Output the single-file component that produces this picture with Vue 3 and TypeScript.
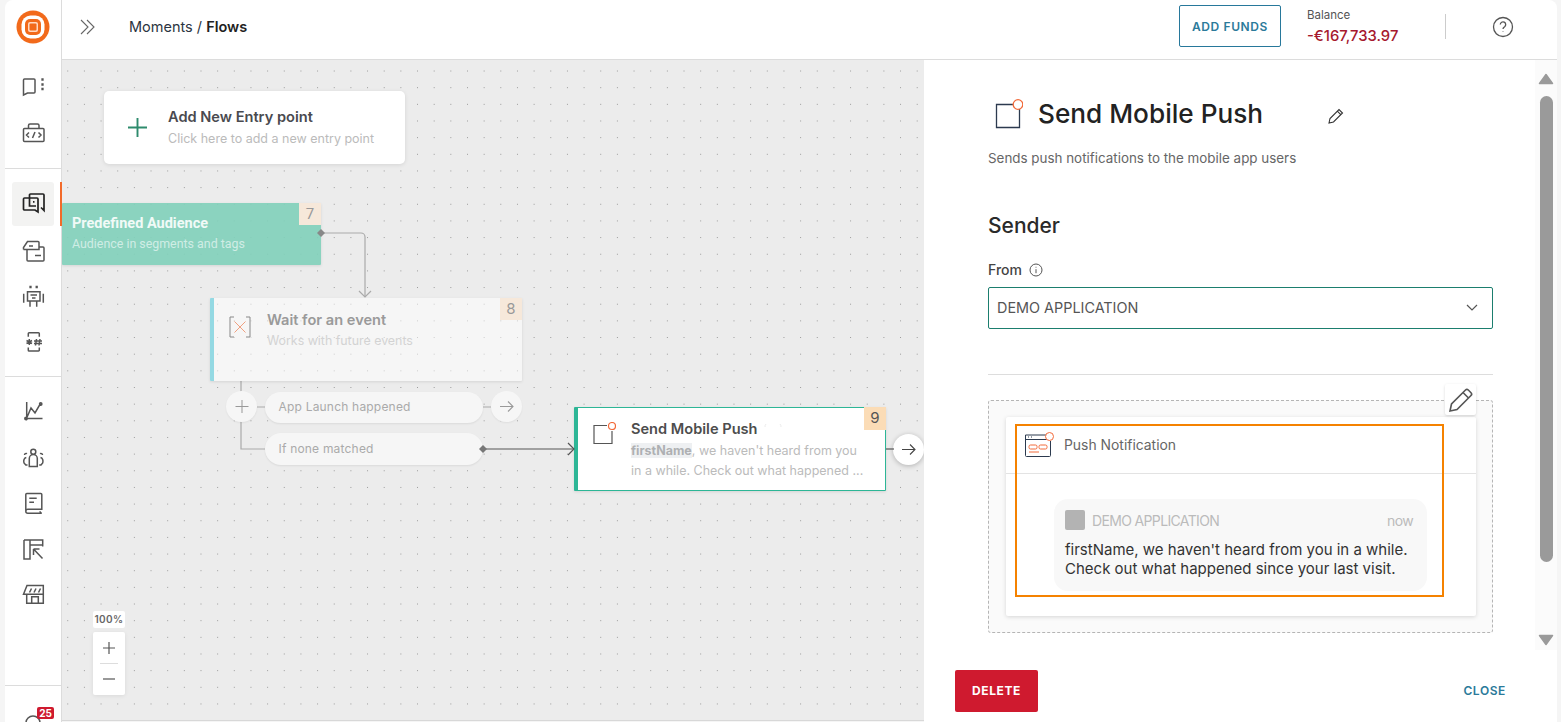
<script setup lang="ts">
interface NavIcon {
  d: string
}

const dot = (x: number, y: number) => `M${x - 0.4} ${y - 0.4}h0.8v0.8h-0.8z`

const topIcons: NavIcon[] = [
  { d: `M3.5 5h9.5a1 1 0 0 1 1 1v12a1 1 0 0 1-1 1H6.500L2.500 21V6a1 1 0 0 1 1-1z${dot(21.5, 5.5)}${dot(21.5, 10.5)}${dot(21.5, 15)}` },
  { d: 'M3.5 8.500h18.500a1 1 0 0 1 1 1v11a1 1 0 0 1-1 1H3.5a1 1 0 0 1-1-1v-11a1 1 0 0 1 1-1zM7.5 8.500V5.500a1.500 1.500 0 0 1 1.500-1.500h7.500a1.500 1.500 0 0 1 1.500 1.500v3M8 12.500l-2.500 2.500 2.500 2.500M17.500 12.500l2.500 2.500-2.500 2.500M14 12l-2.500 6' },
]
const flowIcons: NavIcon[] = [
  { d: 'M8.500 6V3a1 1 0 0 1 1-1H22a1 1 0 0 1 1 1v15.500l-3-3M3.500 6H16a1 1 0 0 1 1 1v13l-3-2H3.500a1 1 0 0 1-1-1V7a1 1 0 0 1 1-1zM8.500 6V14H15M12 9.800h1.500' },
  { d: 'M2.500 10.500V8.500L6.500 2.500H17a1 1 0 0 1 1 1V10.500H2.500M18 8h4a1 1 0 0 1 1 1V21a1 1 0 0 1-1 1H7a1 1 0 0 1-1-1V10.500M8 7h4M14 16.500h6' },
  { d: `M6.500 6.700H19v9.300H6.500zM9.500 10h6.500M11 13h3.500M9 16v5.700M15.700 16v5.700M2.700 8.700v9M22.300 8.700v9${dot(9.5, 2)}${dot(15.7, 2)}` },
  { d: 'M7.300 5.700V2.500a.8.8 0 0 1 .8-.8h9.400a.8.8 0 0 1 .8.8v3.200M7.300 16.500V19.200a.8.8 0 0 0 .8.8h9.400a.8.8 0 0 0 .8-.8v-2.700M8.300 8v6M5.500 9.500l5.500 3M11 9.500l-5.500 3M15.500 8l-1 6.500M19 8l-1 6.500M13 10h8M13 12.500h8' },
]
const reportIcons: NavIcon[] = [
  { d: 'M5.700 3v16.500M4 19.500h17.500M5.700 19L10 9l4 5 5.500-9.500M3.800 19.500a1.200 1.200 0 1 0 2.400 0 1.200 1.200 0 0 0-2.400 0zM18.500 5a1.200 1.200 0 1 0 2.400 0 1.200 1.200 0 0 0-2.400 0z' },
  { d: 'M9.800 6.700a2.500 2.500 0 1 0 5 0 2.500 2.500 0 0 0-5 0zM8.300 21.500V13.500a4 4 0 0 1 8 0v8zM3.500 10a1.700 1.700 0 0 1 2.500-1.400M5.300 12.500C3 13 2.300 15.500 3 18l1.800 2H6.500M21.500 10a1.700 1.700 0 0 0-2.500-1.400M19.500 12.500c2.200.5 2.900 3 2.200 5.500l-1.700 2h-1.800' },
  { d: 'M4.800 19.500V3.500a1 1 0 0 1 1-1h14a1 1 0 0 1 1 1v14.700H6.800a2 2 0 0 0 0 4h14M20.800 22.200a2 2 0 0 1-1.800-2M8.300 7.300h7.400M8.300 11.300h4.700' },
  { d: 'M3 3h18.700v6.500M3 3v19h6V3M9 8h12.700M12.500 12v6M12.500 12h6M12.500 12l9 9.500' },
  { d: 'M2.500 11.300L6 2.500h16.300v8.800zM5.700 11.300v9h16.600v-9M10.700 20.300v-6.600h6.600v6.600M8.500 9.500l2-4M13 9.500l2-4M17.500 9.500l2-4' },
]
</script>

<template>
  <div class="app">
    <aside class="sidebar">
      <div class="nav-group nav-group--logo">
        <svg class="logo" viewBox="0 0 34 34" aria-label="Logo">
          <circle cx="17" cy="17" r="16.500" fill="#f26a1b" />
          <rect x="5.500" y="5.500" width="23" height="23" rx="9" fill="#fff" />
          <rect x="9" y="9" width="16" height="16" rx="5" fill="#f26a1b" />
          <rect x="12" y="12" width="10" height="10" rx="2" fill="#ffd9c2" />
          <rect x="13.500" y="13.500" width="7" height="7" rx="1" fill="#f26a1b" />
        </svg>
        <button v-for="icon in topIcons" :key="icon.d" class="nav-item">
          <svg viewBox="0 0 24 24" class="nav-icon"><path :d="icon.d" /></svg>
        </button>
      </div>
      <div class="nav-group nav-group--flows">
        <button
          v-for="(icon, i) in flowIcons"
          :key="icon.d"
          :class="['nav-item', { 'nav-item--active': i === 0 }]"
        >
          <svg viewBox="0 0 24 24" class="nav-icon"><path :d="icon.d" /></svg>
        </button>
      </div>
      <div class="nav-group nav-group--reports">
        <button v-for="icon in reportIcons" :key="icon.d" class="nav-item">
          <svg viewBox="0 0 24 24" class="nav-icon"><path :d="icon.d" /></svg>
        </button>
      </div>
      <div class="nav-foot">
        <svg viewBox="0 0 24 24" class="nav-icon foot-icon"><circle cx="12" cy="11" r="7" /></svg>
        <span class="foot-badge">25</span>
      </div>
    </aside>

    <div class="main">
      <header class="topbar">
        <svg class="expand" viewBox="0 0 18 18">
          <path d="M2 2l7 7-7 7M8 2l7 7-7 7" />
        </svg>
        <div class="crumbs">Moments / <strong>Flows</strong></div>
        <button class="add-funds">ADD FUNDS</button>
        <div class="balance">
          <span class="balance__label">Balance</span>
          <span class="balance__value">-€167,733.97</span>
        </div>
        <span class="topbar__divider"></span>
        <svg class="help" viewBox="0 0 22 22">
          <circle cx="11" cy="11" r="9.500" />
          <path d="M8.300 8.500a2.700 2.700 0 1 1 4.300 2.200c-1 .7-1.600 1.200-1.600 2.300M11 15.400v.6" />
        </svg>
      </header>

      <div class="workspace">
        <section class="canvas">
          <svg class="wires" width="862" height="662">
            <g fill="none" stroke="#aaa" stroke-width="1.200">
              <path d="M179 321v68h24" />
              <path d="M195 347h8M421 347h8" />
            </g>
          </svg>

          <div class="entry">
            <svg class="entry__plus" viewBox="0 0 20 20"><path d="M10 0v20M0 10h20" /></svg>
            <div>
              <div class="entry__title">Add New Entry point</div>
              <div class="entry__sub">Click here to add a new entry point</div>
            </div>
          </div>

          <div class="node node--audience">
            <span class="badge">7</span>
            <div class="node__title">Predefined Audience</div>
            <div class="node__sub">Audience in segments and tags</div>
          </div>

          <div class="node node--wait">
            <span class="badge">8</span>
            <svg class="wait-icon" viewBox="0 0 24 24">
              <path d="M6 2H2v20h4M18 2h4v20h-4" fill="none" stroke="#888" stroke-width="1" />
              <path d="M6.500 6.500l11 11M17.500 6.500l-11 11" fill="none" stroke="#f0a080" stroke-width="1" />
            </svg>
            <div class="wait-title">Wait for an event</div>
            <div class="wait-sub">Works with future events</div>
          </div>

          <span class="round round--plus">
            <svg viewBox="0 0 14 14"><path d="M7 0v14M0 7h14" /></svg>
          </span>
          <div class="pill pill--one">App Launch happened</div>
          <span class="round round--arrow">
            <svg viewBox="0 0 14 12"><path d="M0 6h13M8 1l5 5-5 5" /></svg>
          </span>
          <div class="pill pill--two">If none matched</div>

          <div class="node node--push">
            <span class="badge badge--strong">9</span>
            <svg class="push-icon" viewBox="0 0 24 24">
              <path d="M15 3.500H2v18h18V9" fill="none" stroke="#555" stroke-width="1.200" />
              <circle cx="20" cy="4" r="3.500" fill="#fff" stroke="#f26a3a" stroke-width="1.200" />
            </svg>
            <div class="push-title">
              Send Mobile Push
              <svg class="push-marks" viewBox="0 0 20 12"><path d="M3 1a4 4 0 0 0-1 3M17 1a4 4 0 0 1 1 3" /></svg>
            </div>
            <div class="push-text">
              <span class="token">firstName</span>, we haven't heard from you<br />in a while. Check out what happened ...
            </div>
          </div>
          <span class="round round--next">
            <svg viewBox="0 0 14 12"><path d="M0 6h13M8 1l5 5-5 5" /></svg>
          </span>

          <svg class="wires" width="862" height="662">
            <g fill="none" stroke="#aaa" stroke-width="1.200">
              <path d="M259 173h40a4 4 0 0 1 4 4v60" />
              <path d="M297 231l6 6 6-6" />
            </g>
            <g fill="none" stroke="#555" stroke-width="1.200">
              <path d="M421 389h90" />
              <path d="M506 383l6 6-6 6" />
              <path d="M824 389h8" />
            </g>
            <path d="M255 173l4-4 4 4-4 4z" fill="#888" />
            <path d="M417 389l4-4 4 4-4 4z" fill="#777" />
          </svg>

          <div class="zoom">
            <div class="zoom__level">100%</div>
            <div class="zoom__ctrl">
              <svg viewBox="0 0 14 14"><path d="M7 1v12M1 7h12" /></svg>
              <span class="zoom__rule"></span>
              <svg viewBox="0 0 14 14"><path d="M1 7h12" /></svg>
            </div>
          </div>
        </section>

        <aside class="panel">
          <div class="panel__body">
            <div class="panel__content">
              <div class="panel__head">
                <svg class="head-icon" viewBox="0 0 28 30">
                  <path d="M20 5.500H1.500v23h23V10" fill="none" stroke="#2c3a4f" stroke-width="1.300" />
                  <circle cx="23" cy="5.500" r="4.800" fill="#fff" stroke="#f26a3a" stroke-width="1.300" />
                </svg>
                <h1>Send Mobile Push</h1>
                <svg class="head-edit" viewBox="0 0 16 16">
                  <path d="M1 15l1-4.500L11 1.500 14.500 5 5.500 14zM9.300 3.200l3.500 3.500" />
                </svg>
              </div>
              <p class="panel__desc">Sends push notifications to the mobile app users</p>

              <h2>Sender</h2>
              <div class="from">
                From
                <svg viewBox="0 0 14 14"><circle cx="7" cy="7" r="6" /><path d="M7 6.200v4M7 3.800v.8" /></svg>
              </div>
              <div class="select">
                <span>DEMO APPLICATION</span>
                <svg viewBox="0 0 12 7"><path d="M1 1l5 5 5-5" /></svg>
              </div>

              <hr />

              <div class="preview">
                <button class="preview__edit">
                  <svg viewBox="0 0 26 26"><path d="M2 24l1.500-7L17.500 3a2 2 0 0 1 2.800 0l2.700 2.700a2 2 0 0 1 0 2.800L9 22.500zM15 5.500l5.500 5.500" /></svg>
                </button>
                <div class="card">
                  <div class="card__head">
                    <svg class="card__icon" viewBox="0 0 30 25">
                      <path d="M23 3H1.500v20.500a1 1 0 0 0 1 1h23a1 1 0 0 0 1-1V9M1.500 7.500h22" fill="none" stroke="#2c3a4f" stroke-width="1" />
                      <path d="M4 5h1M7 5h1" stroke="#2c3a4f" stroke-width="1" />
                      <rect x="5" y="13" width="8" height="4" rx="1.500" fill="none" stroke="#f26a3a" stroke-width="1" />
                      <rect x="15" y="13" width="8" height="4" rx="1.500" fill="none" stroke="#f26a3a" stroke-width="1" />
                      <path d="M5 20h10" stroke="#f26a3a" stroke-width="1" />
                      <circle cx="25.500" cy="4.500" r="4" fill="#fff" stroke="#f26a3a" stroke-width="1" />
                    </svg>
                    <span>Push Notification</span>
                  </div>
                  <div class="bubble">
                    <div class="bubble__head">
                      <span class="bubble__app"></span>
                      <span class="bubble__name">DEMO APPLICATION</span>
                      <span class="bubble__time">now</span>
                    </div>
                    <div class="bubble__text">firstName, we haven't heard from you in a while.<br />Check out what happened since your last visit.</div>
                  </div>
                  <div class="highlight"></div>
                </div>
              </div>
            </div>
            <div class="scrollbar">
              <svg viewBox="0 0 16 12"><path d="M8 1.500l6.500 9h-13z" /></svg>
              <span class="scrollbar__thumb"></span>
              <svg viewBox="0 0 16 12"><path d="M1.500 1.500h13L8 10.500z" /></svg>
            </div>
          </div>
          <footer class="panel__foot">
            <button class="delete">DELETE</button>
            <button class="close">CLOSE</button>
          </footer>
        </aside>
      </div>
    </div>
  </div>
</template>

<style>
html,
body {
  margin: 0;
  background: #f5f5f5;
}
</style>

<style scoped>
.app {
  display: flex;
  height: 722px;
  width: 1561px;
  box-sizing: border-box;
  padding: 0 4px 0 5px;
  overflow: hidden;
  font-family: Inter, 'Noto Sans', sans-serif;
  color: #333;
}

button {
  font-family: inherit;
  border: 0;
  background: none;
  padding: 0;
}

.sidebar {
  width: 57px;
  flex-shrink: 0;
  display: flex;
  flex-direction: column;
  background: #fff;
  border-right: 1px solid #dcdcdc;
  box-sizing: border-box;
  border-top-left-radius: 8px;
}

.nav-group {
  display: flex;
  flex-direction: column;
  align-items: center;
  border-bottom: 1px solid #dcdcdc;
  box-sizing: border-box;
}

.nav-group--logo {
  height: 169px;
  padding-top: 10px;
}

.nav-group--flows {
  height: 208px;
  padding-top: 13px;
}

.nav-group--reports {
  height: 309px;
  padding-top: 11px;
}

.logo {
  width: 34px;
  height: 34px;
  margin-bottom: 19px;
}

.nav-item {
  width: 42px;
  height: 46px;
  display: flex;
  align-items: center;
  justify-content: center;
  position: relative;
  flex-shrink: 0;
}

.nav-item--active {
  height: 44px;
  margin-bottom: 2px;
  background: #f3f3f2;
  border-radius: 3px;
}

.nav-item--active::after {
  content: '';
  position: absolute;
  left: 48px;
  top: 0;
  width: 2px;
  height: 44px;
  background: #f26a2a;
}

.nav-icon {
  width: 24px;
  height: 24px;
  fill: none;
  stroke: #555;
  stroke-width: 1.5;
}

.nav-item--active .nav-icon {
  stroke: #222;
  stroke-width: 1.7;
}

.nav-foot {
  position: relative;
  flex: 1;
}

.foot-icon {
  position: absolute;
  left: 16px;
  top: 26px;
}

.foot-badge {
  position: absolute;
  left: 32px;
  top: 21px;
  width: 17px;
  height: 12px;
  background: #cf1a2f;
  color: #fff;
  font-size: 10px;
  font-weight: 700;
  line-height: 12px;
  text-align: center;
  border-radius: 2px;
}

.main {
  flex: 1;
  min-width: 0;
  display: flex;
  flex-direction: column;
}

.topbar {
  height: 60px;
  flex-shrink: 0;
  box-sizing: border-box;
  display: flex;
  align-items: center;
  background: #fff;
  border-bottom: 1px solid #dcdcdc;
  border-top-right-radius: 8px;
  padding: 0 43px 0 17px;
}

.expand {
  width: 18px;
  height: 18px;
  fill: none;
  stroke: #666;
  stroke-width: 1.1;
  margin-right: 32px;
  margin-top: -6px;
  flex-shrink: 0;
}

.crumbs {
  font-size: 14.5px;
  color: #2b3441;
  flex: 1;
  margin-top: -7px;
}

.crumbs strong {
  font-weight: 600;
  color: #222;
}

.add-funds {
  width: 102px;
  height: 42px;
  border: 1px solid #27789b;
  border-radius: 2px;
  color: #2b7a9a;
  font-size: 12px;
  font-weight: 600;
  letter-spacing: 0.6px;
  margin-top: -7px;
}

.balance {
  display: flex;
  flex-direction: column;
  margin-left: 26px;
  width: 138px;
  margin-top: -5px;
}

.balance__label {
  font-size: 11.5px;
  line-height: 15px;
  color: #555;
}

.balance__value {
  font-size: 14.8px;
  font-weight: 500;
  line-height: 20px;
  margin-top: 3px;
  color: #a6192e;
}

.topbar__divider {
  width: 1px;
  height: 25px;
  background: #ccc;
  margin-top: -6px;
}

.help {
  width: 22px;
  height: 22px;
  margin-left: 46px;
  margin-top: -6px;
  fill: none;
  stroke: #555;
  stroke-width: 1.3;
}

.workspace {
  flex: 1;
  min-height: 0;
  display: flex;
}

.canvas {
  flex: 1;
  min-width: 0;
  position: relative;
  overflow: hidden;
  background-color: #ececec;
  background-image: radial-gradient(circle, #999 0.55px, transparent 0.9px);
  background-size: 16.667px 16.667px;
  background-position: -2.6px 2.7px;
  border-bottom: 1px solid #d8d8d8;
  margin-bottom: 1px;
}

.wires {
  position: absolute;
  left: 0;
  top: 0;
  pointer-events: none;
}

.entry {
  position: absolute;
  left: 42px;
  top: 31px;
  width: 301px;
  height: 73px;
  box-sizing: border-box;
  background: #fff;
  border-radius: 5px;
  box-shadow: 0 1px 4px rgba(0, 0, 0, 0.1);
  display: flex;
  align-items: center;
  padding-left: 24px;
}

.entry__plus {
  width: 19px;
  height: 19px;
  fill: none;
  stroke: #2e8b6d;
  stroke-width: 2;
  margin-right: 21px;
  flex-shrink: 0;
}

.entry__title {
  font-size: 14.6px;
  font-weight: 600;
  color: #4a4a4f;
  line-height: 18px;
}

.entry__sub {
  font-size: 12.5px;
  color: #bbb;
  line-height: 16px;
  margin-top: 5px;
}

.node {
  position: absolute;
  box-sizing: border-box;
  box-shadow: 0 1px 3px rgba(0, 0, 0, 0.1);
  border-radius: 1px;
}

.badge {
  position: absolute;
  right: 0;
  top: 0;
  width: 22px;
  height: 22px;
  background: #f6e8da;
  color: #999;
  font-size: 15px;
  line-height: 22px;
  text-align: center;
}

.badge--strong {
  right: -1px;
  top: -1px;
  background: #fbdcb6;
  color: #555;
  height: 23px;
}

.node--audience {
  left: 0;
  top: 143px;
  width: 259px;
  height: 62px;
  background: rgba(130, 208, 187, 0.92);
  padding: 13px 0 0 10px;
  font-family: Roboto, sans-serif;
}

.node__title {
  font-size: 14.5px;
  font-weight: 700;
  color: #f1faf7;
  line-height: 16px;
}

.node__sub {
  font-size: 12.4px;
  color: rgba(255, 255, 255, 0.6);
  line-height: 16px;
  margin-top: 4px;
}

.node--wait {
  left: 148px;
  top: 238px;
  width: 312px;
  height: 83px;
  background: rgba(255, 255, 255, 0.5);
  border-left: 4px solid #94d9e3;
  padding: 13px 0 0 53px;
}

.wait-icon {
  position: absolute;
  left: 14px;
  top: 17px;
  width: 24px;
  height: 24px;
}

.wait-title {
  font-size: 14.6px;
  font-weight: 600;
  color: #9a9a9a;
  line-height: 18px;
}

.wait-sub {
  font-size: 12.4px;
  color: #d3d3d3;
  line-height: 16px;
  margin-top: 4px;
}

.pill {
  position: absolute;
  left: 203px;
  width: 218px;
  height: 31px;
  box-sizing: border-box;
  background: #f6f6f6;
  border-radius: 16px;
  box-shadow: 0 1px 2px rgba(0, 0, 0, 0.08);
  color: #aaa;
  font-size: 12px;
  letter-spacing: 0.2px;
  line-height: 30px;
  padding-left: 13.5px;
}

.pill--one {
  top: 332px;
}

.pill--two {
  top: 373px;
  height: 32px;
  line-height: 32px;
}

.round {
  position: absolute;
  width: 31px;
  height: 31px;
  border-radius: 50%;
  background: #f6f6f6;
  display: flex;
  align-items: center;
  justify-content: center;
  box-shadow: 0 1px 2px rgba(0, 0, 0, 0.06);
}

.round svg {
  width: 14px;
  height: 13px;
  fill: none;
  stroke: #999;
  stroke-width: 1.1;
}

.round--plus {
  left: 164px;
  top: 331px;
}

.round--arrow {
  left: 429px;
  top: 331px;
}

.round--next {
  left: 831px;
  top: 374px;
  background: #fff;
  box-shadow: 0 1px 5px rgba(0, 0, 0, 0.25);
}

.round--next svg {
  stroke: #444;
}

.node--push {
  left: 512px;
  top: 347px;
  width: 312px;
  height: 84px;
  background: #fff;
  border: 1px solid #2db696;
  border-left-width: 4px;
  padding: 12px 0 0 53px;
}

.push-icon {
  position: absolute;
  left: 14px;
  top: 14px;
  width: 24px;
  height: 24px;
}

.push-title {
  display: flex;
  align-items: center;
  font-size: 14.6px;
  font-weight: 600;
  color: #4d4d4d;
  line-height: 18px;
}

.push-marks {
  width: 20px;
  height: 12px;
  margin-left: 5px;
  fill: none;
  stroke: #ececec;
  stroke-width: 1;
}

.push-text {
  font-size: 12.5px;
  color: #bbb;
  line-height: 20px;
  margin-top: 3px;
}

.token {
  background: #eef0f2;
  font-weight: 700;
  color: #aeb0b3;
}

.zoom {
  position: absolute;
  left: 31px;
  top: 551px;
  width: 32px;
}

.zoom__level {
  height: 17px;
  background: #fff;
  border-radius: 2px;
  color: #666;
  font-size: 10px;
  font-weight: 600;
  letter-spacing: 0.4px;
  line-height: 17px;
  text-align: center;
}

.zoom__ctrl {
  margin-top: 4px;
  height: 63px;
  background: #fff;
  border-radius: 2px;
  box-shadow: 0 1px 4px rgba(0, 0, 0, 0.08);
  display: flex;
  flex-direction: column;
  align-items: center;
  padding-top: 9px;
  box-sizing: border-box;
}

.zoom__ctrl svg {
  width: 14px;
  height: 14px;
  fill: none;
  stroke: #555;
  stroke-width: 1.2;
}

.zoom__rule {
  width: 18px;
  height: 1px;
  background: #ddd;
  margin: 8px 0;
}

.panel {
  width: 633px;
  flex-shrink: 0;
  background: #fff;
  display: flex;
  flex-direction: column;
  min-height: 0;
}

.panel__body {
  flex: 1;
  min-height: 0;
  display: flex;
}

.panel__content {
  flex: 1;
  min-width: 0;
  overflow: hidden;
  padding: 39px 42px 0 64px;
}

.panel__head {
  display: flex;
  align-items: center;
  height: 30px;
}

.head-icon {
  width: 28px;
  height: 30px;
  margin-left: 7px;
  margin-right: 15px;
  flex-shrink: 0;
}

h1 {
  margin: 0;
  width: 290px;
  font-size: 26.2px;
  font-weight: 500;
  color: #222;
  line-height: 34px;
}

.head-edit {
  width: 16px;
  height: 16px;
  fill: none;
  stroke: #333;
  stroke-width: 1.1;
  margin-top: 3px;
}

.panel__desc {
  margin: 19px 0 0;
  font-size: 13.4px;
  line-height: 20px;
  color: #666;
}

h2 {
  margin: 45px 0 0;
  font-size: 21px;
  font-weight: 500;
  line-height: 26px;
  color: #2a2a2a;
}

.from {
  display: flex;
  align-items: center;
  gap: 7px;
  margin-top: 22px;
  font-size: 14px;
  font-weight: 500;
  line-height: 18px;
  color: #444;
}

.from svg {
  width: 14px;
  height: 14px;
  fill: none;
  stroke: #555;
  stroke-width: 1;
}

.select {
  margin-top: 8px;
  height: 42px;
  box-sizing: border-box;
  border: 1px solid #1b7e6e;
  border-radius: 2px;
  display: flex;
  align-items: center;
  justify-content: space-between;
  padding: 0 14px 1px 8px;
  font-size: 14.4px;
  color: #555;
}

.select svg {
  width: 12px;
  height: 7px;
  fill: none;
  stroke: #555;
  stroke-width: 1.2;
}

hr {
  border: 0;
  border-top: 1px solid #ddd;
  margin: 45px 0 25px;
}

.preview {
  position: relative;
  height: 233px;
  box-sizing: border-box;
  border: 1px dashed #b5b5b5;
  border-radius: 3px;
  background: #fafafa;
  padding: 16px 16px 0 17px;
}

.preview__edit {
  position: absolute;
  right: 16px;
  top: -17px;
  width: 31px;
  height: 31px;
  background: #fff;
  border-radius: 2px;
  box-shadow: 0 1px 3px rgba(0, 0, 0, 0.15);
  display: flex;
  align-items: center;
  justify-content: center;
  z-index: 1;
}

.preview__edit svg {
  width: 26px;
  height: 26px;
  fill: none;
  stroke: #555;
  stroke-width: 1.6;
}

.card {
  position: relative;
  height: 199px;
  background: #fff;
  border-radius: 2px;
  box-shadow: 0 1px 4px rgba(0, 0, 0, 0.15);
}

.card__head {
  height: 57px;
  box-sizing: border-box;
  border-bottom: 1px solid #e3e3e3;
  display: flex;
  align-items: center;
  padding: 0 0 1px 18px;
  font-size: 13.9px;
  color: #666;
}

.card__icon {
  width: 30px;
  height: 25px;
  margin-right: 10px;
}

.bubble {
  margin: 25px 0 0 48px;
  width: 373px;
  height: 92px;
  box-sizing: border-box;
  background: #f8f8f8;
  border-radius: 14px;
  padding: 11px 14px 0 11px;
}

.bubble__head {
  display: flex;
  align-items: center;
  height: 20px;
  font-size: 14px;
  letter-spacing: -0.65px;
  color: #bbb;
}

.bubble__app {
  width: 20px;
  height: 20px;
  background: #b3b3b3;
  border-radius: 2px;
  margin-right: 7px;
}

.bubble__name {
  flex: 1;
}

.bubble__text {
  margin-top: 10px;
  font-size: 15px;
  line-height: 19px;
  color: #333;
}

.highlight {
  position: absolute;
  left: 9px;
  top: 7px;
  width: 429px;
  height: 173px;
  box-sizing: border-box;
  border: 2px solid #f58200;
  pointer-events: none;
}

.scrollbar {
  width: 22px;
  flex-shrink: 0;
  background: #fbfbfb;
  display: flex;
  flex-direction: column;
  align-items: center;
  padding-top: 13px;
  box-sizing: border-box;
}

.scrollbar svg {
  width: 16px;
  height: 12px;
  fill: #9a9a9a;
  stroke: #9a9a9a;
  stroke-width: 1.5;
  stroke-linejoin: round;
  flex-shrink: 0;
}

.scrollbar__thumb {
  width: 13px;
  height: 466px;
  margin: 11px 0 72px;
  background: #9a9a9a;
  border-radius: 7px;
  flex-shrink: 0;
}

.panel__foot {
  height: 72px;
  flex-shrink: 0;
  display: flex;
  align-items: flex-start;
  justify-content: space-between;
  box-sizing: border-box;
  padding: 20px 51px 0 31px;
}

.delete {
  width: 83px;
  height: 42px;
  padding-bottom: 2px;
  background: #cf1a2f;
  border-radius: 2px;
  color: #fff;
  font-size: 12px;
  font-weight: 700;
  letter-spacing: 0.6px;
}

.close {
  height: 42px;
  padding-bottom: 2px;
  color: #2b7a9a;
  font-size: 12px;
  font-weight: 600;
  letter-spacing: 0.6px;
}
</style>
